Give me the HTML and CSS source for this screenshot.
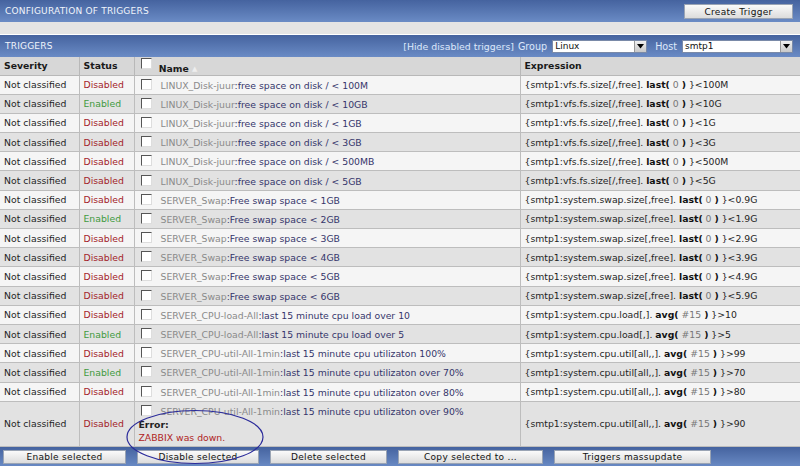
FILE: index.html
```html
<!DOCTYPE html>
<html>
<head>
<meta charset="utf-8">
<link rel="stylesheet" href="styles.css">
</head>
<body>
<div class="page">
  <div class="bar top-bar">
    <span class="bar-title">CONFIGURATION OF TRIGGERS</span>
    <span class="btn create-btn">Create Trigger</span>
  </div>
  <div class="gray-band"></div>
  <div class="bar sub-bar">
    <span class="bar-title">TRIGGERS</span>
    <div class="filters">
      <span class="hide-link">[Hide disabled triggers]</span>
      <span class="lbl">Group</span>
      <span class="sel sel-group"><span class="sel-val">Linux</span><span class="sel-arrow"><svg width="7" height="5" viewBox="0 0 7 5"><path d="M0 0h7L3.5 4.5z" fill="#000"/></svg></span></span>
      <span class="lbl">Host</span>
      <span class="sel sel-host"><span class="sel-val">smtp1</span><span class="sel-arrow"><svg width="7" height="5" viewBox="0 0 7 5"><path d="M0 0h7L3.5 4.5z" fill="#000"/></svg></span></span>
    </div>
  </div>
  <table class="grid">
    <colgroup><col class="c1"><col class="c2"><col class="c3"><col class="c4"></colgroup>
    <thead>
      <tr><th>Severity</th><th>Status</th><th class="name-h"><span class="cb"></span> <span class="nh">Name</span> <span class="sort">&#9650;</span></th><th>Expression</th></tr>
    </thead>
    <tbody id="rows"></tbody>
  </table>
  <div class="bar bottom-bar">
    <span class="btn b1">Enable selected</span>
    <span class="btn b2">Disable selected</span>
    <span class="btn b3">Delete selected</span>
    <span class="btn b4">Copy selected to ...</span>
    <span class="btn b5">Triggers massupdate</span>
  </div>
  <svg class="ellipse" width="150" height="62" viewBox="0 0 150 62"><ellipse cx="75" cy="31" rx="68" ry="26.5" fill="none" stroke="#2a2a9a" stroke-width="1.2"/></svg>
</div>
<script>
var data = [
 ["Disabled","LINUX_Disk-juur","free space on disk / < 100M","{smtp1:vfs.fs.size[/,free].","last","0","}<100M"],
 ["Enabled","LINUX_Disk-juur","free space on disk / < 10GB","{smtp1:vfs.fs.size[/,free].","last","0","}<10G"],
 ["Disabled","LINUX_Disk-juur","free space on disk / < 1GB","{smtp1:vfs.fs.size[/,free].","last","0","}<1G"],
 ["Disabled","LINUX_Disk-juur","free space on disk / < 3GB","{smtp1:vfs.fs.size[/,free].","last","0","}<3G"],
 ["Disabled","LINUX_Disk-juur","free space on disk / < 500MB","{smtp1:vfs.fs.size[/,free].","last","0","}<500M"],
 ["Disabled","LINUX_Disk-juur","free space on disk / < 5GB","{smtp1:vfs.fs.size[/,free].","last","0","}<5G"],
 ["Disabled","SERVER_Swap","Free swap space < 1GB","{smtp1:system.swap.size[,free].","last","0","}<0.9G"],
 ["Enabled","SERVER_Swap","Free swap space < 2GB","{smtp1:system.swap.size[,free].","last","0","}<1.9G"],
 ["Disabled","SERVER_Swap","Free swap space < 3GB","{smtp1:system.swap.size[,free].","last","0","}<2.9G"],
 ["Disabled","SERVER_Swap","Free swap space < 4GB","{smtp1:system.swap.size[,free].","last","0","}<3.9G"],
 ["Disabled","SERVER_Swap","Free swap space < 5GB","{smtp1:system.swap.size[,free].","last","0","}<4.9G"],
 ["Disabled","SERVER_Swap","Free swap space < 6GB","{smtp1:system.swap.size[,free].","last","0","}<5.9G"],
 ["Disabled","SERVER_CPU-load-All","last 15 minute cpu load over 10","{smtp1:system.cpu.load[,].","avg","#15","}>10"],
 ["Enabled","SERVER_CPU-load-All","last 15 minute cpu load over 5","{smtp1:system.cpu.load[,].","avg","#15","}>5"],
 ["Disabled","SERVER_CPU-util-All-1min","last 15 minute cpu utilizaton 100%","{smtp1:system.cpu.util[all,,].","avg","#15","}>99"],
 ["Enabled","SERVER_CPU-util-All-1min","last 15 minute cpu utilizaton over 70%","{smtp1:system.cpu.util[all,,].","avg","#15","}>70"],
 ["Disabled","SERVER_CPU-util-All-1min","last 15 minute cpu utilizaton over 80%","{smtp1:system.cpu.util[all,,].","avg","#15","}>80"],
 ["Disabled","SERVER_CPU-util-All-1min","last 15 minute cpu utilizaton over 90%","{smtp1:system.cpu.util[all,,].","avg","#15","}>90"]
];
var tb = document.getElementById('rows');
var html = '';
data.forEach(function(d, i){
  var last = i === data.length - 1;
  var cls = (i % 2 ? 'even' : 'odd') + (last ? ' tall' : '');
  var name = '<span class="cb"></span><span class="tpl">' + d[1] + '</span><span class="nm">:' + d[2].replace(/</g,'&lt;') + '</span>';
  if (last) name = '<div class="nmline">' + name + '</div><div class="err-t">Error:</div><div class="err-m">ZABBIX was down.</div>';
  html += '<tr class="' + cls + '"><td>Not classified</td><td class="' + (d[0]==='Enabled'?'en':'dis') + '">' + d[0] + '</td><td class="namec">' + name + '</td><td>' + d[3] + ' <b>' + d[4] + '(</b> <span class="arg">' + d[5] + '</span> <b>)</b> ' + d[6].replace(/</g,'&lt;') + '</td></tr>';
});
tb.innerHTML = html;
</script>
</body>
</html>
```
FILE: styles.css
```css
html, body { margin: 0; padding: 0; }
body { font-family: "DejaVu Sans", Verdana, sans-serif; font-size: 9.3px; color: #222; background: #fff; }
.page { width: 800px; height: 466px; position: relative; overflow: hidden; }
.bar { background: linear-gradient(#45639f, #6a8bc5); display: flex; align-items: center; color: #fff; }
.top-bar { height: 22px; justify-content: space-between; padding: 0 7px 0 5px; box-sizing: border-box; }
.bar-title { font-size: 9px; letter-spacing: 0.2px; color: #f0f4fb; }
.btn { background: linear-gradient(#fafafa, #dcdcdc); border: 1px solid #9aa4b4; color: #111; font-size: 9px; display: inline-flex; align-items: center; justify-content: center; box-sizing: border-box; letter-spacing: 0.3px; }
.create-btn { width: 109px; height: 15px; margin-top: 1px; }
.gray-band { height: 12px; background: #e4e4e4; border-bottom: 1px solid #fff; }
.sub-bar { height: 22px; justify-content: space-between; padding: 0 7px 0 5px; box-sizing: border-box; }
.filters { display: flex; align-items: center; }
.hide-link { color: #dde8fb; font-size: 9.4px; margin-right: 4px; }
.lbl { color: #dde8fb; font-size: 9.6px; margin-right: 5px; }
.sel { background: #fff; border: 1px solid #7a8aa8; height: 13px; display: flex; align-items: stretch; box-sizing: border-box; color: #111; }
.sel-group { width: 95px; margin-right: 8px; }
.sel-host { width: 111px; }
.sel-val { flex: 1; padding-left: 2px; font-size: 9px; line-height: 11px; }
.sel-arrow { width: 11px; background: linear-gradient(#f0f0f0, #c8c8c8); border-left: 1px solid #999; display: flex; align-items: center; justify-content: center; }
.grid { width: 800px; border-collapse: collapse; table-layout: fixed; }
.c1 { width: 79px; } .c2 { width: 55px; } .c3 { width: 386px; } .c4 { width: 280px; }
.grid th { background: #d7d7d7; height: 18px; text-align: left; font-weight: bold; padding: 0 4px; border: 1px solid #b8b8b8; border-top: none; color: #1a1a1a; box-sizing: border-box; }
.grid td { height: 19.2px; padding: 0 4px; border: 1px solid #bdbdbd; white-space: nowrap; overflow: hidden; box-sizing: border-box; color: #1f1f1f; }
.grid th:first-child, .grid td:first-child { border-left: none; }
.grid th:last-child, .grid td:last-child { border-right: none; }
tr.odd td { background: #f5f5f5; }
tr.even td { background: #e2e2e2; }
tr.tall td { height: 45px; }
td.en { color: #3f9a3f; }
td.dis { color: #a3222a; }
.cb { display: inline-block; width: 9px; height: 9px; border: 1px solid #555; border-right-color: #ddd; border-bottom-color: #ddd; background: #fff; vertical-align: -1px; margin: 0 9px 0 2px; }
.name-h .cb { margin-right: 4px; vertical-align: 2px; }
.nh { position: relative; top: 1px; }
.sort { color: #eee; font-size: 7px; }
.tpl { color: #8a8a8a; }
.nm { color: #35356b; }
.arg { color: #777; }
.grid td b { color: #111; }
.namec .nmline { margin-top: 0; }
.err-t { font-weight: bold; color: #222; margin-top: 2px; }
.err-m { color: #b02424; margin-top: 2px; }
.bottom-bar { height: 20px; padding-left: 3px; gap: 11px; }
.bottom-bar .btn { height: 14px; }
.b1 { width: 123px; } .b2 { width: 122px; } .b3 { width: 117px; } .b4 { width: 145px; } .b5 { width: 157px; }
.ellipse { position: absolute; left: 120px; top: 406px; }
```
